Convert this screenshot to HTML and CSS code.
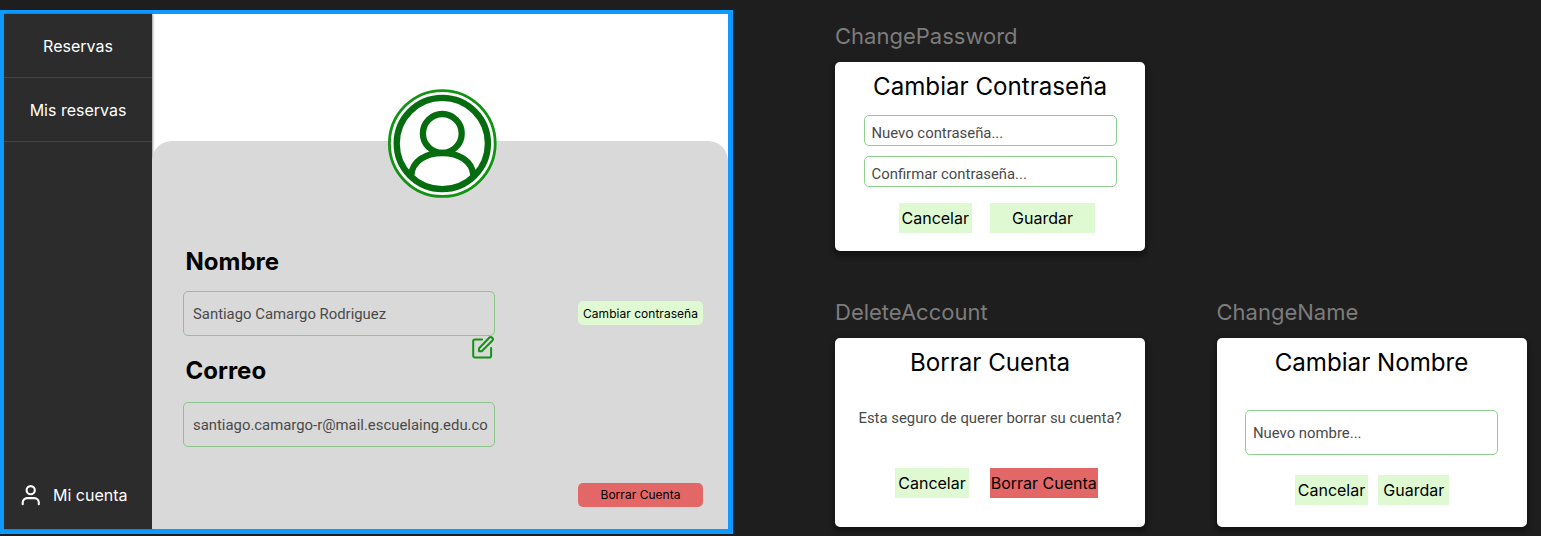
FILE: index.html
```html
<!DOCTYPE html>
<html lang="es">
<head>
<meta charset="utf-8">
<title>Mi cuenta</title>
<link rel="stylesheet" href="styles.css">
</head>
<body>
<div class="canvas">
  <section class="frame account">
    <nav class="sidebar">
      <a class="nav-item">Reservas</a>
      <a class="nav-item">Mis reservas</a>
      <a class="nav-account">
        <svg class="nav-icon" viewBox="0 0 22 24"><circle cx="10.7" cy="7.2" r="4.1"/><path d="M2.7 21.3v-1.8a4.4 4.4 0 0 1 4.4-4.4h7.3a4.4 4.4 0 0 1 4.4 4.4v1.8"/></svg>
        <span>Mi cuenta</span>
      </a>
    </nav>
    <main class="main">
      <svg class="avatar" viewBox="0 0 110 110">
        <circle class="avatar-rim" cx="55.3" cy="55.5" r="52.9"/>
        <circle class="avatar-line" cx="55.3" cy="55.5" r="45.6"/>
        <circle class="avatar-line" cx="55.3" cy="45.4" r="19.4"/>
        <path class="avatar-line" d="M24.3 87C25.3 73.5 38.3 65 55.3 65S85.3 73.5 86.3 87"/>
      </svg>
      <div class="panel">
        <div class="fields">
          <h2 class="heading">Nombre</h2>
          <div class="field">Santiago Camargo Rodriguez
            <svg class="edit" viewBox="0 0 24 24"><path d="M11 4.5H4a1.8 1.8 0 0 0-1.8 1.8v14.4A1.8 1.8 0 0 0 4 22.5h14.3a1.8 1.8 0 0 0 1.8-1.8V13"/><path d="M18.2 2.7a2.1 2.1 0 0 1 3 3L11 16q-.3.3-.8.3H8v-2.4q0-.5.4-.9z"/></svg>
          </div>
          <h2 class="heading second">Correo</h2>
          <div class="field mail">santiago.camargo-r@mail.escuelaing.edu.co</div>
        </div>
        <div class="actions">
          <button class="small-btn">Cambiar contraseña</button>
          <button class="small-btn danger">Borrar Cuenta</button>
        </div>
      </div>
    </main>
  </section>

  <section class="frame password">
    <div class="label">ChangePassword</div>
    <div class="modal">
      <h1 class="title">Cambiar Contraseña</h1>
      <div class="input">Nuevo contraseña...</div>
      <div class="input next">Confirmar contraseña...</div>
      <div class="buttons"><button class="btn">Cancelar</button><button class="btn wide">Guardar</button></div>
    </div>
  </section>

  <section class="frame delete">
    <div class="label">DeleteAccount</div>
    <div class="modal">
      <h1 class="title">Borrar Cuenta</h1>
      <p class="question">Esta seguro de querer borrar su cuenta?</p>
      <div class="buttons"><button class="btn">Cancelar</button><button class="btn danger">Borrar Cuenta</button></div>
    </div>
  </section>

  <section class="frame name">
    <div class="label">ChangeName</div>
    <div class="modal">
      <h1 class="title">Cambiar Nombre</h1>
      <div class="input tall">Nuevo nombre...</div>
      <div class="buttons"><button class="btn">Cancelar</button><button class="btn save">Guardar</button></div>
    </div>
  </section>
</div>
</body>
</html>
```
FILE: styles.css
```css
* { box-sizing: border-box; }
body { margin: 0; background: #1e1e1e; font-family: Inter, sans-serif; }
.canvas { position: relative; width: 1541px; height: 536px; overflow: hidden; }
.frame { position: absolute; }
button { border: 0; padding: 0; font-family: inherit; color: #000; white-space: nowrap; }

.account { left: 0; top: 10px; width: 733px; height: 524px; border: 4px solid #0d99ff; border-right-width: 5px; border-bottom-width: 5px; display: flex; background: #fff; }
.sidebar { position: relative; width: 148px; background: #2c2c2c; color: #fff; display: flex; flex-direction: column; box-shadow: 1px 0 2px rgba(0,0,0,.4); font-size: 16px; }
.nav-item { height: 64px; border-bottom: 1px solid #444; display: flex; align-items: center; justify-content: center; }
.nav-account { margin-top: auto; height: 68px; padding-left: 16px; display: flex; align-items: center; gap: 11px; }
.nav-icon { width: 22px; height: 24px; fill: none; stroke: #fff; stroke-width: 2.1; stroke-linecap: round; }

.main { position: relative; flex: 1; padding-top: 127px; display: flex; }
.avatar { position: absolute; left: 235px; top: 74px; width: 110px; height: 110px; }
.avatar-rim { fill: #fff; stroke: #129412; stroke-width: 2.8; }
.avatar-line { fill: none; stroke: #056c0f; stroke-width: 6.3; }
.panel { flex: 1; background: #d9d9d9; border-radius: 20px 20px 0 0; padding: 106px 25px 0 31px; display: flex; justify-content: space-between; }
.fields { width: 312px; }
.heading { margin: 0 0 14px 2.5px; font-size: 24px; line-height: 30px; font-weight: 700; }
.heading.second { margin-top: 20px; margin-bottom: 16px; }
.field { position: relative; height: 45px; border: 1px solid #8cc48c; border-radius: 5px; padding-left: 9px; display: flex; align-items: center; font: 14.88px Roboto, sans-serif; color: #4a4a4a; white-space: nowrap; }
.edit { position: absolute; left: 287px; top: 43px; width: 24px; height: 24px; fill: none; stroke: #129412; stroke-width: 2; stroke-linecap: round; stroke-linejoin: round; }
.actions { width: 125px; padding: 54px 0 22px; display: flex; flex-direction: column; justify-content: space-between; }
.small-btn { height: 24px; border-radius: 5px; background: #dffad3; font-size: 12px; letter-spacing: .03px; }
.danger, .small-btn.danger { background: #e46767; }
.small-btn.danger { padding-bottom: 2px; }

.password { left: 835px; top: 20px; }
.delete { left: 835px; top: 296px; }
.name { left: 1216.5px; top: 296px; }
.label { height: 42px; line-height: 32px; font-size: 22px; color: #7c7c7c; }
.modal { width: 310px; height: 189px; background: #fff; border-radius: 5px; box-shadow: 0 3px 5px 2px rgba(0,0,0,.35); padding-top: 10px; display: flex; flex-direction: column; align-items: center; }
.title { margin: 0; font-size: 24.15px; line-height: 30px; font-weight: 400; }
.input { width: 253px; height: 31px; border: 1px solid #8fd08f; border-radius: 5px; padding: 4px 0 0 7px; display: flex; align-items: center; font: 14.88px Roboto, sans-serif; color: #4a4a4a; margin-top: 13px; }
.input.next { margin-top: 10px; }
.input.tall { height: 45px; margin-top: 32px; padding-top: 0; }
.buttons { display: flex; margin-top: 16px; gap: 18px; margin-left: 13.5px; }
.btn { width: 73.5px; height: 30px; background: #dffad3; font-size: 16px; }
.btn.wide { width: 105px; }
.btn.danger { width: 108px; background: #e46767; }
.btn.save { width: 71px; }
.question { margin: 30px 0 0; font: 14.88px/20px Roboto, sans-serif; color: #4a4a4a; white-space: nowrap; }
.delete .buttons { margin-top: 39.5px; margin-left: 13px; gap: 21px; }
.name .buttons { margin-top: 20px; margin-left: 1px; gap: 10px; }
```
